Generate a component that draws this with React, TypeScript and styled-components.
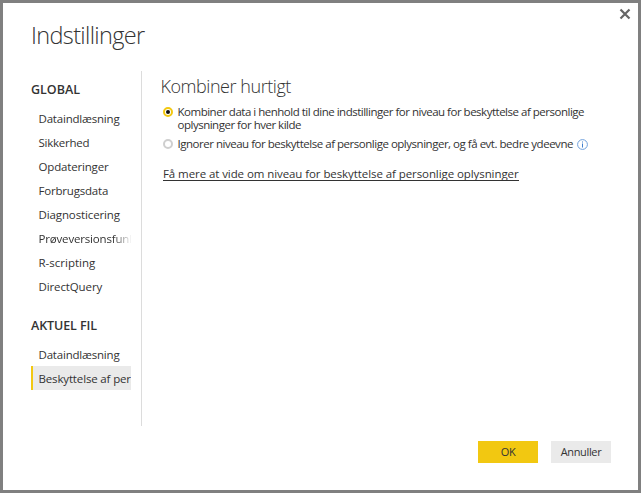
import React from 'react';
import styled, { createGlobalStyle } from 'styled-components';

const GlobalStyle = createGlobalStyle`
  *, *::before, *::after { box-sizing: border-box; }
  body { margin: 0; background: #fff; overflow: hidden; }
`;

const Dialog = styled.div`
  position: relative;
  display: flex;
  flex-direction: column;
  width: 641px;
  height: 493px;
  border: 3px solid #808080;
  background: #fff;
  color: #333;
  font-family: 'Open Sans', 'Noto Sans', sans-serif;
  font-size: 11.5px;
`;

const CloseButton = styled.button`
  position: absolute;
  top: 5px;
  right: 7px;
  display: flex;
  width: 12px;
  height: 12px;
  padding: 0;
  border: 0;
  background: none;
`;

const Title = styled.h1`
  height: 68px;
  margin: 0;
  padding: 15px 0 0 28px;
  font-size: 23.5px;
  line-height: 34px;
  font-weight: 300;
  letter-spacing: -0.65px;
`;

const Body = styled.div`
  display: flex;
  height: 355px;
`;

const Sidebar = styled.nav`
  width: 139px;
  padding: 6px 10px 0 28px;
  border-right: 1px solid #dcdcdc;
`;

const Group = styled.section`
  margin-bottom: 15px;
`;

const GroupTitle = styled.h2<{ $spacing: number }>`
  margin: 0 0 3px;
  height: 26px;
  font-size: 12.5px;
  line-height: 26px;
  font-weight: 600;
  letter-spacing: ${(p) => p.$spacing}px;
  white-space: nowrap;
`;

const NavItem = styled.div<{ $spacing: number; $selected?: boolean; $fade?: boolean }>`
  width: 100px;
  height: 24px;
  padding-left: 5.5px;
  border-left: 2px solid ${(p) => (p.$selected ? '#f2c811' : 'transparent')};
  background: ${(p) => (p.$selected ? '#eaeaea' : 'transparent')};
  line-height: 25px;
  letter-spacing: ${(p) => p.$spacing}px;
  white-space: nowrap;
  overflow: hidden;
  ${(p) => p.$fade && 'mask-image: linear-gradient(to right, #000 82%, transparent 101%);'}
`;

const Content = styled.main`
  flex: 1;
  padding: 2px 0 0 19px;
`;

const SectionTitle = styled.h2`
  margin: 0 0 0 -0.5px;
  height: 32px;
  font-size: 18px;
  line-height: 26px;
  font-weight: 300;
  letter-spacing: -0.45px;
`;

const Option = styled.label`
  display: flex;
  align-items: flex-start;
  margin-bottom: 6px;
  padding-left: 2px;
`;

const Radio = styled.span<{ $checked?: boolean }>`
  display: flex;
  align-items: center;
  justify-content: center;
  width: 10px;
  height: 10px;
  margin: 2px 4.5px 0 0;
  border: 2px solid ${(p) => (p.$checked ? '#f2c811' : '#cfcfcf')};
  border-radius: 50%;
  &::after {
    content: '';
    width: 4px;
    height: 4px;
    border-radius: 50%;
    background: ${(p) => (p.$checked ? '#111' : 'transparent')};
  }
`;

const Line = styled.span<{ $spacing: number }>`
  display: block;
  line-height: 13px;
  letter-spacing: ${(p) => p.$spacing}px;
  white-space: nowrap;
`;

const InfoIcon = styled.svg`
  width: 11px;
  height: 11px;
  margin: 2px 0 0 4.5px;
`;

const Link = styled.a`
  display: inline-block;
  margin: 11px 0 0 2px;
  height: 14px;
  border-bottom: 1px solid #333;
  line-height: 14px;
  letter-spacing: -0.08px;
  white-space: nowrap;
`;

const Footer = styled.footer`
  display: flex;
  justify-content: flex-end;
  gap: 13px;
  padding: 15px 27px 0 0;
`;

const Button = styled.button<{ $primary?: boolean; $spacing: number }>`
  width: 60px;
  height: 22px;
  padding: 0;
  border: 0;
  background: ${(p) => (p.$primary ? '#f2c811' : '#eaeaea')};
  color: #333;
  font: inherit;
  font-size: 11px;
  line-height: 22px;
  letter-spacing: ${(p) => p.$spacing}px;
`;

interface Item {
  label: string;
  spacing: number;
  selected?: boolean;
  fade?: boolean;
}

const groups: { title: string; spacing: number; items: Item[] }[] = [
  {
    title: 'GLOBAL',
    spacing: 0,
    items: [
      { label: 'Dataindlæsning', spacing: -0.2 },
      { label: 'Sikkerhed', spacing: -0.25 },
      { label: 'Opdateringer', spacing: -0.17 },
      { label: 'Forbrugsdata', spacing: -0.2 },
      { label: 'Diagnosticering', spacing: -0.12 },
      { label: 'Prøveversionsfunktioner', spacing: -0.17, fade: true },
      { label: 'R-scripting', spacing: 0 },
      { label: 'DirectQuery', spacing: -0.12 },
    ],
  },
  {
    title: 'AKTUEL FIL',
    spacing: -0.1,
    items: [
      { label: 'Dataindlæsning', spacing: -0.2 },
      { label: 'Beskyttelse af personlige oplysninger', spacing: -0.15, selected: true },
    ],
  },
];

export default function App() {
  return (
    <>
      <GlobalStyle />
      <Dialog role="dialog">
        <CloseButton aria-label="Luk">
          <svg width="12" height="12" viewBox="0 0 12 12" fill="none" stroke="#666" strokeWidth="2.2">
            <path d="M1.5 1.5l9 9M10.5 1.5l-9 9" />
          </svg>
        </CloseButton>
        <Title>Indstillinger</Title>
        <Body>
          <Sidebar>
            {groups.map((g) => (
              <Group key={g.title}>
                <GroupTitle $spacing={g.spacing}>{g.title}</GroupTitle>
                {g.items.map((i) => (
                  <NavItem key={i.label} $spacing={i.spacing} $selected={i.selected} $fade={i.fade}>
                    {i.label}
                  </NavItem>
                ))}
              </Group>
            ))}
          </Sidebar>
          <Content>
            <SectionTitle>Kombiner hurtigt</SectionTitle>
            <Option>
              <Radio $checked />
              <span>
                <Line $spacing={-0.49}>Kombiner data i henhold til dine indstillinger for niveau for beskyttelse af personlige</Line>
                <Line $spacing={-0.49}>oplysninger for hver kilde</Line>
              </span>
            </Option>
            <Option>
              <Radio />
              <Line $spacing={-0.48}>Ignorer niveau for beskyttelse af personlige oplysninger, og få evt. bedre ydeevne</Line>
              <InfoIcon viewBox="0 0 11 11" fill="none">
                <circle cx="5.5" cy="5.5" r="4.9" stroke="#6fa0dc" />
                <path d="M5.5 4.5v4M5.5 2.5v1" stroke="#3f7fcf" />
              </InfoIcon>
            </Option>
            <Link>Få mere at vide om niveau for beskyttelse af personlige oplysninger</Link>
          </Content>
        </Body>
        <Footer>
          <Button $primary $spacing={-0.5}>OK</Button>
          <Button $spacing={-0.35}>Annuller</Button>
        </Footer>
      </Dialog>
    </>
  );
}
